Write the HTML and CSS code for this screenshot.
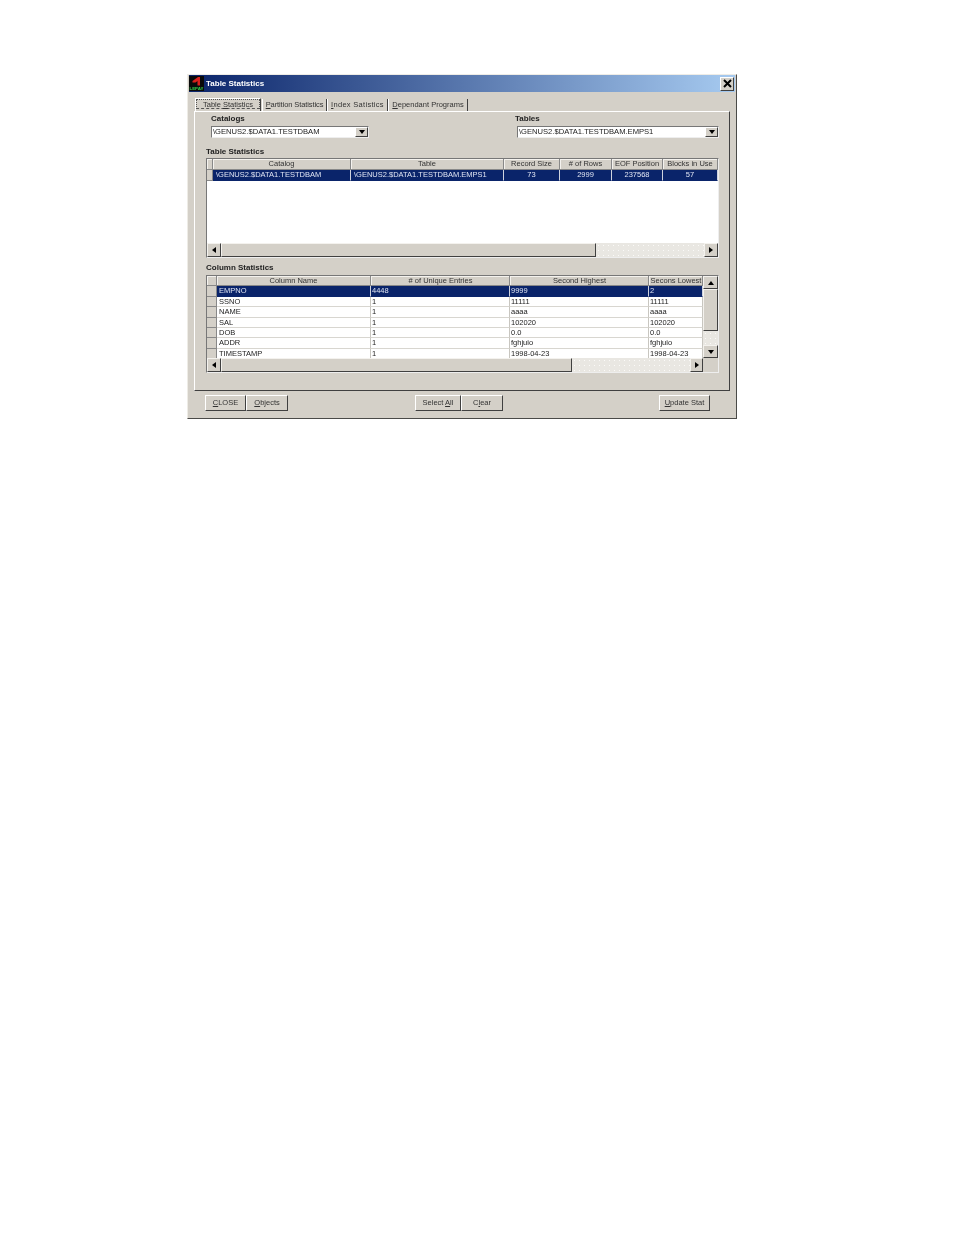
FILE: index.html
```html
<!DOCTYPE html>
<html lang="en">
<head>
<meta charset="utf-8">
<title>Table Statistics</title>
<link rel="stylesheet" href="styles.css">
</head>
<body>
<div class="window">
  <div class="titlebar">
    <svg class="logo" viewBox="0 0 15 15" aria-hidden="true">
      <rect width="15" height="15" fill="#0a0a0a"/>
      <path d="M3.5 5 L9 1 L11 1 L11 9.5 L8.5 9.5 L8.5 5 L6.5 6.5 L3.5 6.5 Z" fill="#d8201c"/>
      <text x="0.5" y="14.2" class="logo-text">LEPAY</text>
    </svg>
    <span class="title">Table Statistics</span>
    <button class="close" type="button" aria-label="Close">
      <svg viewBox="0 0 9 9" aria-hidden="true"><path d="M1 1 L8 8 M8 1 L1 8" stroke="#000" stroke-width="2" fill="none"/></svg>
    </button>
  </div>
  <div class="tabs">
    <div class="tab active"><span class="focus">Table <u>S</u>tatistics</span></div>
    <div class="tab t2"><u>P</u>artition Statistics</div>
    <div class="tab t3"><u>I</u>ndex Satistics</div>
    <div class="tab t4"><u>D</u>ependant Programs</div>
  </div>
  <div class="panel">
    <div class="selectors">
      <div class="selector catalogs">
        <div class="label">Catalogs</div>
        <div class="combo"><span class="combo-value">\GENUS2.$DATA1.TESTDBAM</span><span class="combo-btn"><i class="arrow down"></i></span></div>
      </div>
      <div class="selector tables">
        <div class="label">Tables</div>
        <div class="combo"><span class="combo-value">\GENUS2.$DATA1.TESTDBAM.EMPS1</span><span class="combo-btn"><i class="arrow down"></i></span></div>
      </div>
    </div>

    <div class="label section first">Table Statistics</div>
    <div class="grid grid-one">
      <div class="table cols-one">
        <div class="row head">
          <div class="ind"></div><div>Catalog</div><div>Table</div><div>Record Size</div><div># of Rows</div><div>EOF Position</div><div>Blocks in Use</div>
        </div>
        <div class="row sel center-stats">
          <div class="ind"></div><div class="pad">\GENUS2.$DATA1.TESTDBAM</div><div class="pad">\GENUS2.$DATA1.TESTDBAM.EMPS1</div><div>73</div><div>2999</div><div>237568</div><div>57</div>
        </div>
      </div>
      <div class="hscroll">
        <span class="sbtn"><i class="arrow left"></i></span>
        <span class="thumb thumb-one"></span>
        <span class="track"></span>
        <span class="sbtn"><i class="arrow right"></i></span>
      </div>
    </div>

    <div class="label section second">Column Statistics</div>
    <div class="grid grid-two">
      <div class="grid-body">
        <div class="table cols-two">
          <div class="row head">
            <div class="ind"></div><div>Column Name</div><div># of Unique Entries</div><div>Second Highest</div><div>Secons Lowest</div>
          </div>
          <div class="row sel"><div class="ind"></div><div>EMPNO</div><div>4448</div><div>9999</div><div>2</div></div>
          <div class="row"><div class="ind"></div><div>SSNO</div><div>1</div><div>11111</div><div>11111</div></div>
          <div class="row"><div class="ind"></div><div>NAME</div><div>1</div><div>aaaa</div><div>aaaa</div></div>
          <div class="row"><div class="ind"></div><div>SAL</div><div>1</div><div>102020</div><div>102020</div></div>
          <div class="row"><div class="ind"></div><div>DOB</div><div>1</div><div>0.0</div><div>0.0</div></div>
          <div class="row"><div class="ind"></div><div>ADDR</div><div>1</div><div>fghjuio</div><div>fghjuio</div></div>
          <div class="row"><div class="ind"></div><div>TIMESTAMP</div><div>1</div><div>1998-04-23</div><div>1998-04-23</div></div>
        </div>
        <div class="vscroll">
          <span class="sbtn"><i class="arrow up"></i></span>
          <span class="thumb thumb-v"></span>
          <span class="track"></span>
          <span class="sbtn"><i class="arrow down"></i></span>
        </div>
      </div>
      <div class="hscroll">
        <span class="sbtn"><i class="arrow left"></i></span>
        <span class="thumb thumb-two"></span>
        <span class="track"></span>
        <span class="sbtn narrow"><i class="arrow right"></i></span>
        <span class="corner"></span>
      </div>
    </div>
  </div>
  <div class="footer">
    <div class="btn-group">
      <button class="btn w41" type="button"><u>C</u>LOSE</button>
      <button class="btn w42" type="button"><u>O</u>bjects</button>
    </div>
    <div class="btn-group middle">
      <button class="btn w46" type="button">Select <u>A</u>ll</button>
      <button class="btn w42" type="button">C<u>l</u>ear</button>
    </div>
    <button class="btn w51" type="button"><u>U</u>pdate Stat</button>
  </div>
</div>
</body>
</html>
```
FILE: styles.css
```css
* { box-sizing: border-box; }
html, body { margin: 0; background: #fff; }
body {
  width: 954px;
  height: 1235px;
  padding: 74px 0 0 187px;
  font-family: "Liberation Sans", Arial, sans-serif;
  font-size: 8px;
  color: #222;
  overflow: hidden;
}
.window {
  width: 550px;
  height: 345px;
  background: #d4d0c8;
  border: 1px solid #eeece6;
  border-right-color: #4a4a48;
  border-bottom-color: #4a4a48;
  padding: 0 1px;
  display: flex;
  flex-direction: column;
  filter: blur(0.35px);
}
.titlebar {
  height: 17px;
  flex: none;
  display: flex;
  align-items: center;
  background: linear-gradient(90deg, #0a246a, #a6caf0);
}
.logo { width: 15px; height: 15px; flex: none; }
.logo-text { font: bold 4.4px "Liberation Sans", sans-serif; fill: #35d04a; }
.title { margin-left: 2px; color: #fff; font-weight: bold; font-size: 8px; flex: 1; }
.close {
  width: 14px;
  height: 14px;
  margin-right: 1px;
  padding: 0;
  background: #d4d0c8;
  border: 1px solid;
  border-color: #fff #404040 #404040 #fff;
  display: flex;
  align-items: center;
  justify-content: center;
}
.close svg { width: 9px; height: 9px; }
.tabs { display: flex; height: 19px; padding: 7px 0 0 6px; flex: none; font-size: 7.5px; color: #333; }
.tab {
  height: 12px;
  line-height: 12px;
  border-right: 1px solid #404040;
  white-space: nowrap;
  text-align: center;
  background: #d4d0c8;
  position: relative;
  z-index: 1;
}
.tab.active {
  width: 66px;
  height: 13px;
  margin-top: -1px;
  margin-right: 1px;
  border: 1px solid #fff;
  border-right-color: #404040;
  border-bottom: 0;
}
.focus { display: block; height: 10px; line-height: 9px; margin: 0; border: 1px dotted #555; border-bottom-style: dashed; }
.t2 { width: 65px; border-left: 1px solid #fff; letter-spacing: -0.1px; }
.t3 { width: 61px; border-left: 1px solid #fff; letter-spacing: 0.3px; }
.t4 { width: 80px; border-left: 1px solid #fff; }
.panel {
  width: 536px;
  height: 280px;
  margin-left: 5px;
  flex: none;
  border: 1px solid #fff;
  border-right-color: #404040;
  border-bottom-color: #404040;
  padding: 3px 10px 0 11px;
  display: flex;
  flex-direction: column;
}
.selectors { display: flex; justify-content: space-between; height: 33px; padding-left: 5px; flex: none; }
.selector { display: flex; flex-direction: column; }
.catalogs { width: 158px; }
.tables { width: 204px; }
.label { font-weight: bold; font-size: 8px; height: 11px; line-height: 8px; color: #222; }
.tables .combo { margin-left: 2px; width: 202px; }
.combo {
  height: 12px;
  background: #fff;
  border: 1px solid;
  border-color: #777 #eee #eee #777;
  display: flex;
  justify-content: space-between;
  font-size: 7.6px;
  line-height: 10px;
  padding-left: 1px;
}
.combo-value { white-space: nowrap; }
.combo-btn {
  width: 13px;
  background: #d4d0c8;
  border: 1px solid;
  border-color: #fff #404040 #404040 #fff;
  display: flex;
  align-items: center;
  justify-content: center;
}
.arrow { display: block; width: 0; height: 0; border: 0 solid transparent; }
.arrow.down { border-width: 4px 3.5px 0; border-top-color: #000; }
.arrow.up { border-width: 0 3.5px 4px; border-bottom-color: #000; }
.arrow.left { border-width: 3.5px 4px 3.5px 0; border-right-color: #000; }
.arrow.right { border-width: 3.5px 0 3.5px 4px; border-left-color: #000; }
.section { height: 7px; line-height: 7px; flex: none; }
.section.second { margin-top: 6px; }
.grid {
  width: 513px;
  flex: none;
  border: 1px solid #777;
  border-right-color: #eee;
  border-bottom-color: #eee;
  background: #fff;
  display: flex;
  flex-direction: column;
}
.grid-one { height: 100px; margin-top: 3px; justify-content: space-between; }
.grid-two { height: 98px; margin-top: 4px; background: #d4d0c8; }
.grid-body { display: flex; height: 82px; flex: none; }
.table { flex: 1; background: #fff; overflow: hidden; }
.row { display: grid; font-size: 7.5px; }
.cols-one .row { grid-template-columns: 6px 138px 153px 56px 52px 51px 1fr; height: 11px; line-height: 10px; }
.cols-two .row { grid-template-columns: 10px 154px 139px 139px 1fr; height: 10.4px; line-height: 10px; }
.row > div {
  border-right: 1px solid #c8c6c0;
  border-bottom: 1px solid #d8d6d0;
  padding-left: 2px;
  white-space: nowrap;
  overflow: hidden;
}
.cols-two .row > div:nth-child(n+3) { padding-left: 1px; }
.row > .ind { background: #d4d0c8; padding: 0; border-style: solid; border-width: 0 1px 1px 0; border-color: #888; }
.cols-two .head > div, .head > div {
  background: #d4d0c8;
  text-align: center;
  padding: 0;
  border-right: 1px solid #888;
  border-bottom: 1px solid #888;
  box-shadow: inset 1px 1px 0 #f4f2ee;
  color: #333;
}
.sel > div {
  background: #0a246a;
  color: #dfe4f2;
  border-right-color: #cfd3de;
  border-bottom-color: #0a246a;
}
.sel > .ind { background: #d4d0c8; border-bottom-color: #888; border-right-color: #888; }
.center-stats > div:nth-child(n+4) { text-align: center; padding: 0; }
.pad { padding-left: 3px !important; }
.hscroll { display: flex; height: 14px; flex: none; background: #d4d0c8; }
.vscroll { display: flex; flex-direction: column; width: 15px; flex: none; background: #d4d0c8; }
.sbtn {
  width: 14px;
  height: 14px;
  flex: none;
  background: #d4d0c8;
  border: 1px solid;
  border-color: #f4f2ee #404040 #404040 #f4f2ee;
  display: flex;
  align-items: center;
  justify-content: center;
}
.sbtn.narrow { width: 13px; }
.vscroll .sbtn { width: 15px; height: 13px; }
.thumb {
  display: block;
  flex: none;
  background: #d4d0c8;
  border: 1px solid;
  border-color: #f4f2ee #404040 #404040 #f4f2ee;
}
.thumb-one { width: 375px; }
.thumb-two { width: 351px; }
.thumb-v { height: 42px; }
.track {
  flex: 1;
  background-color: #e9e7e2;
  background-image: radial-gradient(circle, #fbfaf8 0.6px, transparent 0.8px);
  background-size: 5px 5px;
}
.corner { width: 15px; flex: none; background: #d4d0c8; }
.footer { display: flex; padding: 4px 25px 0 16px; }
.btn-group { display: flex; }
.middle { margin-left: 127px; }
.btn {
  height: 16px;
  padding: 0 0 1px;
  background: #d4d0c8;
  border: 1px solid;
  border-color: #fff #404040 #404040 #fff;
  font: 7.5px "Liberation Sans", Arial, sans-serif;
  color: #333;
}
.w41 { width: 41px; }
.w42 { width: 42px; }
.w46 { width: 46px; }
.w51 { width: 51px; margin-left: auto; }
```
